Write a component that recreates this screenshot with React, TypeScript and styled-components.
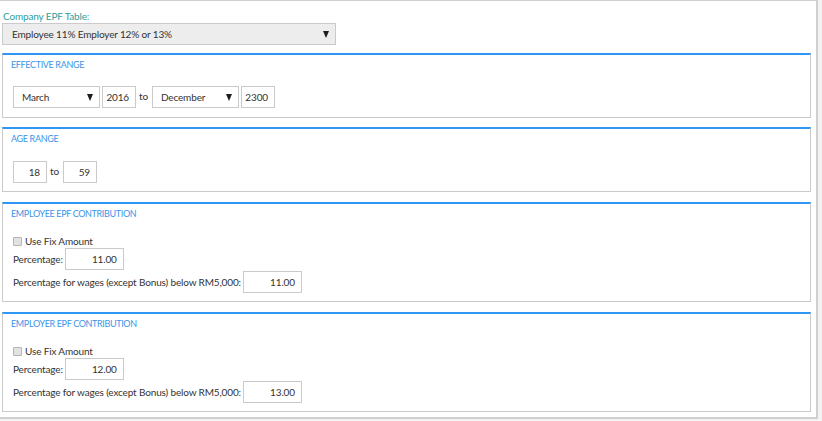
import React from "react";
import styled, { createGlobalStyle } from "styled-components";

const Global = createGlobalStyle`
  html, body { margin: 0; padding: 0; background: #f3f3f3; }
  body { font-family: Lato, "Noto Sans", sans-serif; font-size: 10px; letter-spacing: -0.15px; color: #333; }
  * { box-sizing: border-box; }
`;

const Panel = styled.div`
  width: 819px;
  height: 419px;
  margin-left: -1px;
  background: #fff;
  border: 1px solid #cfcfcf;
  border-right-width: 2px;
  border-bottom-width: 2px;
  padding: 8px 5px 0 2px;
  display: flex;
  flex-direction: column;
  overflow: hidden;
`;

const TopLabel = styled.div`
  color: #2f9e9e;
  line-height: 14px;
  padding-left: 1px;
  flex-shrink: 0;
`;

const BigSelect = styled.div`
  width: 334px;
  height: 22px;
  flex-shrink: 0;
  background: #ededed;
  border: 1px solid #cacaca;
  display: flex;
  align-items: center;
  justify-content: space-between;
  padding: 0 6px 0 9px;
  margin-bottom: 8px;
`;

const Arrow = styled.span`
  width: 0;
  height: 0;
  border-left: 3.5px solid transparent;
  border-right: 3.5px solid transparent;
  border-top: 7px solid #1e1e1e;
  margin-top: 1px;
`;

const Section = styled.div<{ $h: number; $mb: number }>`
  height: ${(p) => p.$h}px;
  flex-shrink: 0;
  border: 1px solid #cacaca;
  border-top: 2px solid #2f96f3;
  padding: 4px 10px 0 10px;
  margin-bottom: ${(p) => p.$mb}px;
  display: flex;
  flex-direction: column;
`;

const Title = styled.div<{ $gap: number }>`
  color: #3b94e8;
  font-size: 9px;
  letter-spacing: -0.35px;
  line-height: 12px;
  text-transform: uppercase;
  margin-left: -2px;
  margin-bottom: ${(p) => p.$gap}px;
`;

const Row = styled.div`
  display: flex;
  align-items: center;
  gap: 2px;
`;

const Select = styled.div`
  width: 87px;
  height: 22px;
  border: 1px solid #cacaca;
  background: #fff;
  display: flex;
  align-items: center;
  justify-content: space-between;
  padding: 0 6px 0 8px;
`;

const Box = styled.div<{ $w: number }>`
  width: ${(p) => p.$w}px;
  height: 22px;
  border: 1px solid #cacaca;
  background: #fff;
  display: flex;
  align-items: center;
  justify-content: flex-end;
  padding: 0 6px;
`;

const To = styled.span`
  padding: 0 2px 2px 1px;
`;

const CheckRow = styled.label`
  display: flex;
  align-items: center;
  gap: 3px;
  line-height: 14px;
  height: 14px;
`;

const Check = styled.span`
  width: 9px;
  height: 9px;
  border: 1px solid #b5b5b5;
  background: #e2e2e2;
  border-radius: 1px;
`;

const FieldRow = styled.div<{ $mb?: number }>`
  display: flex;
  align-items: center;
  gap: 2px;
  margin-bottom: ${(p) => p.$mb ?? 0}px;
`;

function Contribution({ title, pct, below, h }: { title: string; pct: string; below: string; h: number }) {
  return (
    <Section $h={h} $mb={10}>
      <Title $gap={14}>{title}</Title>
      <CheckRow>
        <Check />
        Use Fix Amount
      </CheckRow>
      <FieldRow $mb={1}>
        Percentage:
        <Box $w={59}>{pct}</Box>
      </FieldRow>
      <FieldRow>
        Percentage for wages (except Bonus) below RM5,000:
        <Box $w={59}>{below}</Box>
      </FieldRow>
    </Section>
  );
}

export default function App() {
  return (
    <>
      <Global />
      <Panel>
        <TopLabel>Company EPF Table:</TopLabel>
        <BigSelect>
          <span>Employee 11% Employer 12% or 13%</span>
          <Arrow />
        </BigSelect>
        <Section $h={65} $mb={9}>
          <Title $gap={15}>Effective Range</Title>
          <Row>
            <Select>
              <span>March</span>
              <Arrow />
            </Select>
            <Box $w={34}>2016</Box>
            <To>to</To>
            <Select>
              <span>December</span>
              <Arrow />
            </Select>
            <Box $w={34}>2300</Box>
          </Row>
        </Section>
        <Section $h={65} $mb={10}>
          <Title $gap={16}>Age Range</Title>
          <Row>
            <Box $w={34}>18</Box>
            <To>to</To>
            <Box $w={34}>59</Box>
          </Row>
        </Section>
        <Contribution title="Employee EPF Contribution" pct="11.00" below="11.00" h={100} />
        <Contribution title="Employer EPF Contribution" pct="12.00" below="13.00" h={100} />
      </Panel>
    </>
  );
}
